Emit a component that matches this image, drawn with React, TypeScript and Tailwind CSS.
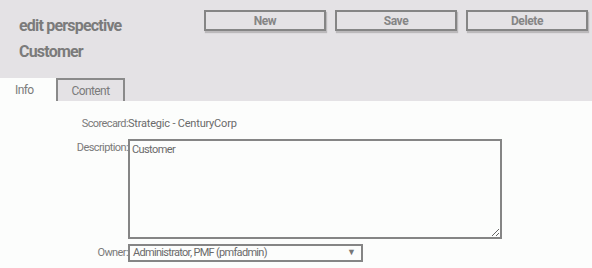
import React from "react";

export default function App() {
  const font = { fontFamily: "Roboto, 'Liberation Sans', sans-serif" };
  return (
    <div className="w-[592px] h-[268px] bg-[#fcfdfc] overflow-hidden" style={font}>
      <div className="h-[101px] bg-[#e4e2e5] flex flex-col">
        <div className="flex h-[78px]">
          <div className="w-[204px] pl-[19px] pt-[13px] text-[16px] font-bold text-[#7b7b7b] leading-[26px] tracking-[-0.8px]">
            <div>edit perspective</div>
            <div>Customer</div>
          </div>
          <div className="flex pt-[10px] gap-[9px]">
            {["New", "Save", "Delete"].map((t) => (
              <button
                key={t}
                className="w-[122px] h-[21px] border-2 border-[#858585] bg-[#e4e2e5] text-[12px] font-bold text-[#858585] tracking-[-0.4px] shadow-[1px_2px_1px_rgba(0,0,0,0.18)] leading-none"
              >
                {t}
              </button>
            ))}
          </div>
        </div>
        <div className="flex h-[23px] items-end">
          <div className="w-[56px] h-[23px] bg-[#fcfdfc] text-[12px] text-[#7b7b7b] tracking-[-0.6px] flex items-center pl-[15px]">
            Info
          </div>
          <div className="w-[69px] h-[23px] border-t-2 border-l-2 border-r-2 border-[#8a8a8a] text-[12px] text-[#7b7b7b] tracking-[-0.6px] flex items-center justify-center pt-[1px]">
            Content
          </div>
        </div>
      </div>
      <div className="grid grid-cols-[128px_1fr] text-[11px] mt-[16px]">
        <div className="text-right text-[#7a7a7a] leading-[14px] tracking-[-0.6px]">Scorecard:</div>
        <div className="text-[#6a6a6a] leading-[14px] tracking-[-0.2px]">Strategic - CenturyCorp</div>
        <div className="text-right text-[#7a7a7a] leading-[14px] mt-[8px] pt-[2px] tracking-[-0.6px]">Description:</div>
        <div className="mt-[8px]">
          <textarea
            defaultValue="Customer"
            className="block w-[374px] h-[100px] border-2 border-[#858585] bg-[#fcfdfc] text-[11px] text-[#6a6a6a] tracking-[-0.6px] px-[2px] py-[1px] resize-y outline-none"
            style={font}
          />
        </div>
        <div className="text-right text-[#7a7a7a] mt-[5px] leading-[18px] tracking-[-0.6px]">Owner:</div>
        <div className="mt-[5px]">
          <div className="w-[235px] h-[18px] border-2 border-[#858585] flex items-center justify-between pl-[3px] pr-[5px] text-[#6a6a6a]">
            <span className="tracking-[-0.7px]">Administrator, PMF (pmfadmin)</span>
            <span className="text-[9px] text-[#777]">▼</span>
          </div>
        </div>
      </div>
    </div>
  );
}
